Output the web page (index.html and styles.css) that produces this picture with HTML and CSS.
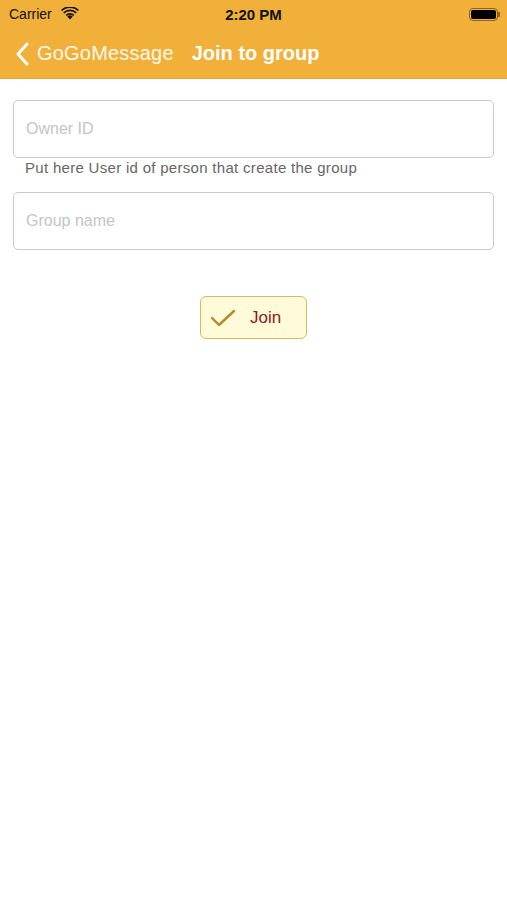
FILE: index.html
```html
<!DOCTYPE html>
<html>
<head>
<meta charset="utf-8">
<link rel="stylesheet" href="styles.css">
</head>
<body>
<header class="header">
  <div class="status">
    <div class="carrier">Carrier
      <svg class="wifi" width="18" height="13" viewBox="0 0 18 13">
        <path d="M9 12.5 L6.3 9.6 A3.9 3.9 0 0 1 11.7 9.6 Z" fill="#111"/>
        <path d="M4.6 7.8 A6.3 6.3 0 0 1 13.4 7.8 L12.2 9.1 A4.6 4.6 0 0 0 5.8 9.1 Z" fill="#111"/>
        <path d="M2.2 5.3 A9.7 9.7 0 0 1 15.8 5.3 L14.6 6.6 A8 8 0 0 0 3.4 6.6 Z" fill="#111"/>
        <path d="M0 2.9 A12.9 12.9 0 0 1 18 2.9 L16.8 4.1 A11.2 11.2 0 0 0 1.2 4.1 Z" fill="#111"/>
      </svg>
    </div>
    <div class="time">2:20 PM</div>
    <div class="battery"><span class="batt-body"><span class="batt-fill"></span></span><span class="batt-tip"></span></div>
  </div>
  <nav class="navbar">
    <svg class="chevron" width="14" height="24" viewBox="0 0 14 24"><path d="M12 2 L3 12 L12 22" fill="none" stroke="#fff" stroke-width="3" stroke-linecap="round" stroke-linejoin="round"/></svg>
    <span class="back">GoGoMessage</span>
    <span class="title">Join to group</span>
  </nav>
</header>
<main class="content">
  <div class="field"><span class="placeholder">Owner ID</span></div>
  <div class="help">Put here User id of person that create the group</div>
  <div class="field second"><span class="placeholder">Group name</span></div>
  <div class="btn-row">
    <button class="join">
      <svg width="26" height="20" viewBox="0 0 26 20"><path d="M2 10 L9 17 L24 3" fill="none" stroke="#b8892a" stroke-width="2.4" stroke-linecap="round" stroke-linejoin="round"/></svg>
      <span>Join</span>
    </button>
  </div>
</main>
</body>
</html>
```
FILE: styles.css
```css
* { box-sizing: border-box; }
body {
  margin: 0;
  font-family: "Liberation Sans", Arial, sans-serif;
  background: #fff;
}
.header {
  background: #f0b03a;
  height: 79px;
  border-bottom: 1px solid #e6a832;
}
.status {
  height: 28px;
  display: flex;
  align-items: center;
  justify-content: space-between;
  padding: 0 7px 0 9px;
  color: #111;
  position: relative;
}
.carrier {
  font-size: 14px;
  display: flex;
  align-items: center;
  gap: 9px;
}
.wifi { margin-top: -2px; }
.time {
  position: absolute;
  left: 0; right: 0;
  text-align: center;
  font-weight: bold;
  font-size: 15px;
}
.battery { display: flex; align-items: center; }
.batt-body {
  width: 29px; height: 13px;
  border: 1px solid #8a6420;
  border-radius: 4px;
  padding: 1px;
  display: flex;
}
.batt-fill { flex: 1; background: #000; border-radius: 2px; }
.batt-tip { width: 2px; height: 5px; background: #8a6420; border-radius: 0 1px 1px 0; }
.navbar {
  height: 50px;
  display: flex;
  align-items: center;
  padding-left: 15px;
  color: #fff;
}
.chevron { margin-right: 8px; margin-top: 1px; }
.back { font-size: 20px; color: #fff8e8; letter-spacing: 0.2px; }
.title { font-size: 20px; font-weight: bold; margin-left: 18px; }
.content { padding: 21px 13px 0 13px; }
.field {
  height: 58px;
  border: 1px solid #c9c9c9;
  border-radius: 5px;
  display: flex;
  align-items: center;
  padding-left: 12px;
}
.placeholder { color: #c4c4c8; font-size: 16px; }
.help {
  font-size: 15px;
  letter-spacing: 0.3px;
  color: #666;
  padding: 2px 0 0 12px;
  height: 34px;
  line-height: 15px;
}
.btn-row {
  display: flex;
  justify-content: center;
  margin-top: 46px;
}
.join {
  width: 107px;
  height: 43px;
  background: #fffbd9;
  border: 1.5px solid #dcb862;
  border-radius: 6px;
  display: flex;
  align-items: center;
  padding: 0 0 0 9px;
  font-family: "Liberation Sans", Arial, sans-serif;
  gap: 14px;
}
.join span { color: #8b1a1a; font-size: 17px; }
```
